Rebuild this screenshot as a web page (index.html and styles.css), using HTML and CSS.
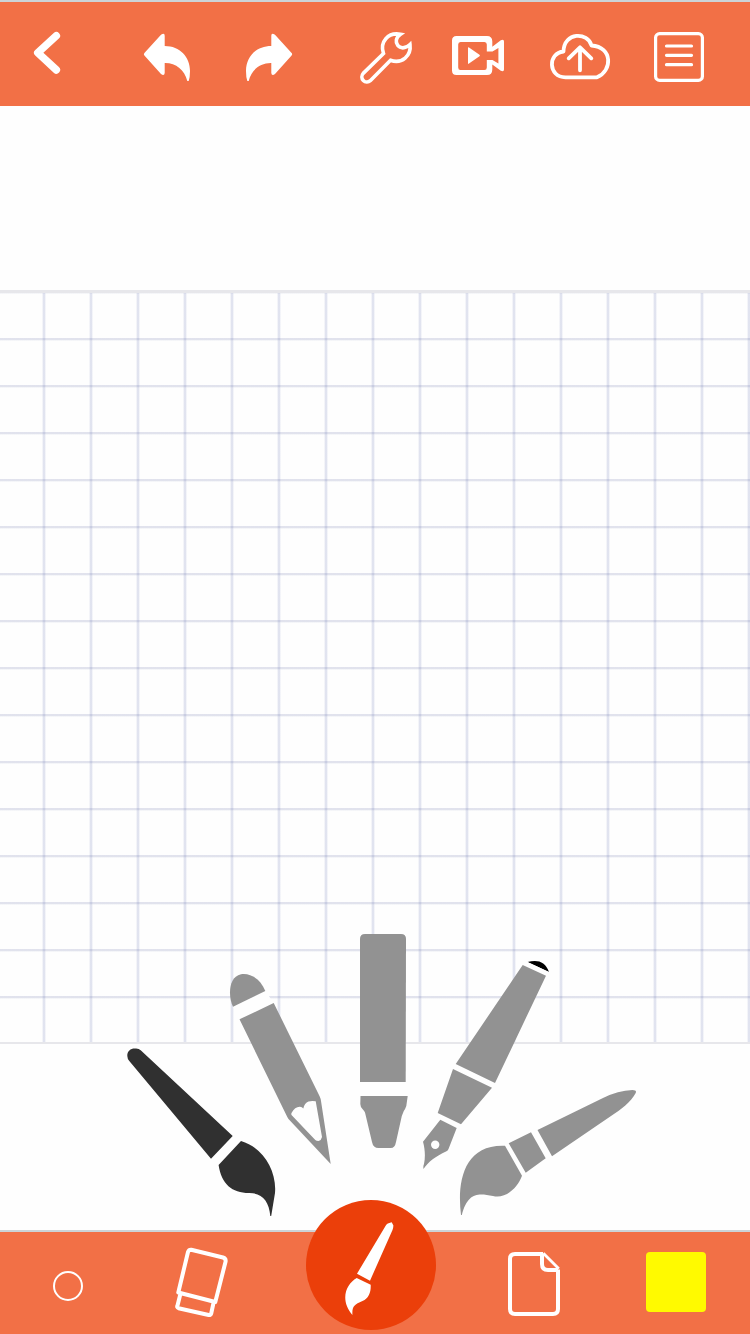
FILE: index.html
```html
<!DOCTYPE html>
<html lang="en">
<head>
<meta charset="utf-8">
<title>Drawing board</title>
<link rel="stylesheet" href="styles.css">
</head>
<body>
<div class="app">
  <header class="toolbar">
    <button class="tool" aria-label="Back"><svg viewBox="0 2 100 104"><path class="line back" d="M56.3 35.8 37.8 52.8 56.3 69.9"/></svg></button>
    <button class="tool" aria-label="Undo"><svg viewBox="100 2 118 104"><path class="solid" d="M144.4 55.5Q143.3 54.3 144.4 53.1L161 34.8Q164.7 32.3 164.7 35.7V46C180 46 190 57 190 71Q190 77 188.7 81H187.3C184.5 70 176 62.8 164.7 63V73Q164.3 76.2 161 74Z"/></svg></button>
    <button class="tool" aria-label="Redo"><svg viewBox="218 2 118 104"><path class="solid" transform="translate(436 0) scale(-1 1)" d="M144.4 55.5Q143.3 54.3 144.4 53.1L161 34.8Q164.7 32.3 164.7 35.7V46C180 46 190 57 190 71Q190 77 188.7 81H187.3C184.5 70 176 62.8 164.7 63V73Q164.3 76.2 161 74Z"/></svg></button>
    <button class="tool" aria-label="Settings"><svg viewBox="336 2 96 104"><path class="line wrench" d="M363.2 73.400 383.500 53.500C379.500 42 388 32 400.500 34.300C390.500 41 400 54 410 44.500C411.500 55.500 402 64.500 390.500 60.300L370.300 80.700A5.100 5.100 0 0 1 363.200 73.400Z"/></svg></button>
    <button class="tool" aria-label="Record video"><svg viewBox="432 2 95 104"><path class="solid" fill-rule="evenodd" d="M456.500 36H487Q492.300 36 492.300 41.500V46.800L500.800 40.300Q504 38.600 504 41.500V69.500Q504 72 500.800 70.700L492.300 64.400V69.500Q492.300 75 487 75H456.500Q452 75 452 70.500V40.500Q452 36 456.500 36ZM460.500 42Q458.200 42 458.200 44.500V67.500Q458.200 70 460.500 70H484.500Q486.800 70 486.800 67.500V60H492.500L498.400 63.600V47.900L492.500 51.500H486.800V44.500Q486.800 42 484.500 42ZM468 48Q468 46.800 469 47.600L479.500 54.800Q480.400 55.500 479.500 56.200L469 63.600Q468 64.400 468 63Z"/></svg></button>
    <button class="tool" aria-label="Upload"><svg viewBox="527 2 105 104"><path class="line cloud" d="M565.5 77.300H597C612.500 71 613 47 591.500 45.500C588 32 564 31.500 563.500 51.500C547.500 53 548 77.300 565.500 77.300Z"/><path class="line cloud" d="M580 48V70.300M568.700 58.300 580 47.300 591.300 58.300"/></svg></button>
    <button class="tool" aria-label="Menu"><svg viewBox="632 2 118 104"><rect class="line menu" x="655.6" y="33.6" width="46.8" height="46.8" rx="4"/><path class="line menu" d="M666.5 46H691.500M666.500 55.300H691.500M666.500 64.700H691.500"/></svg></button>
  </header>

  <main class="workspace">
    <div class="paper"></div>
    <svg class="brush-fan" viewBox="110 920 540 310">
      <g class="brush selected">
        <path d="M127.300 1056C127 1051 131 1048.300 135 1048.500Q138.500 1048 140.700 1050.300L232.700 1136 211 1158.700 129.300 1061Q127.300 1058.500 127.300 1056Z"/>
        <path d="M241 1141C262 1147 277 1170 275 1193L271.200 1216H270.300C269 1201 262 1192.800 249 1193C232 1193 221.500 1184 218.600 1165Z"/>
      </g>
      <g class="brush">
        <path class="gap" d="M233 1006.700 265.300 991 273.700 1003 239.500 1019.300Z"/>
        <path d="M233 1006.700C228.500 998 227.500 977 241 974.200C251 972.500 261 980 265.300 991Z"/>
        <path d="M239.500 1019.300 273.700 1003 319.500 1096Q320.700 1098.500 321 1101L330.700 1164 288.500 1119Q287.500 1117.500 286.800 1116Z"/>
        <path class="gap" d="M315.700 1101.300 322 1137Q321.500 1140 318.500 1141Q316.500 1141 315.300 1140L291.500 1115Q291 1114 291.500 1113Q295 1106.500 300 1106.700Q302 1107 303.300 1108.500Q304.500 1103 308.500 1101.500Q311.500 1100.800 315.700 1101.300Z"/>
      </g>
      <g class="brush">
        <path d="M360 1082V939Q360 934 365 934H401Q406 934 406 939L405.700 1082Z"/>
        <path d="M360.500 1096H407.700L406.300 1106Q405.500 1108.500 403.800 1111L401.800 1116 396 1142Q395 1148 390.700 1148H378.500Q373.200 1148 372 1142L365 1112.500Q364.500 1111 362.500 1109Q360.300 1106.500 360.300 1104Z"/>
      </g>
      <g class="brush">
        <path class="ink" d="M527.500 962C538 959.500 545 961.500 549 972Z"/>
        <path class="gap" d="M527.500 962 549 972 546 975.700 522.700 965Z"/>
        <path d="M522.700 965 546 975.700 495 1083 455.700 1064ZM453 1069 492 1087.700 461 1124.300 437.700 1113ZM440.300 1119.700 456.700 1128 448.500 1149Q448 1150.700 446 1151.500C436 1156 428 1162 423.500 1169Q423 1166 424 1164C425.500 1157 425 1149 423 1141.700Z"/>
        <circle class="gap" cx="435.2" cy="1144.7" r="4.2"/>
      </g>
      <g class="brush">
        <path d="M505 1145.800 522 1175.800C517 1189 505 1199 493 1196C478 1193 468 1192 461.800 1215H461C457 1183 463 1144 505 1145.800ZM508.700 1143.300 531 1132.300 545.700 1158.300 525.700 1172.700ZM537.500 1130 603 1098Q618 1090.500 632.500 1090Q637 1090 635.700 1093C631 1102 621 1109.500 611 1116L552 1156.300Z"/>
      </g>
    </svg>
  </main>

  <footer class="dock">
    <button class="tool" aria-label="Brush size"><svg viewBox="0 1232 136 102"><circle class="line size" cx="68" cy="1286" r="14"/></svg></button>
    <button class="tool" aria-label="Eraser"><svg viewBox="136 1232 134 102"><path class="line eraser" d="M178.300 1292.500 188 1252Q189 1249.500 191.300 1249.800L223 1257.500Q226 1258.500 225.600 1261.500L215.300 1302 178.300 1292.500M180.500 1293.500 177.500 1305.500Q176.500 1307.500 178.500 1308.200L208.700 1315Q210.700 1315.500 211.200 1313.500L213.700 1302"/></svg></button>
    <button class="tool current" aria-label="Brush"><span class="disc"><svg viewBox="306 1200 130 130"><path class="solid" d="M357 1273.700 385.800 1225.500Q386.800 1223.500 388.500 1223.200L391.700 1222.200 393.400 1225.500Q393.300 1228 392.500 1230L370 1280.700ZM356.700 1278 370.700 1284.800C371 1292 369 1298 362.500 1301C354 1304.500 352 1306.500 352.400 1315C339.500 1300 346 1284 356.700 1278Z"/></svg></span></button>
    <button class="tool" aria-label="Page"><svg viewBox="470 1232 130 102"><path class="line page" d="M543 1254H515Q510 1254 510 1259V1309Q510 1314 515 1314H553Q558 1314 558 1309V1269.500"/><path class="line page" d="M542 1254V1264Q542 1270 548 1270H558"/><path class="line fold" d="M543.300 1253.200 558.800 1268.700"/></svg></button>
    <button class="tool" aria-label="Colour"><span class="swatch"></span></button>
  </footer>
</div>
</body>
</html>
```
FILE: styles.css
```css
* { box-sizing: border-box; }

body { margin: 0; background: #fff; }

.app {
  display: flex;
  flex-direction: column;
  width: 750px;
  height: 1334px;
  overflow: hidden;
  font-family: "Liberation Sans", sans-serif;
}

.toolbar,
.dock {
  display: grid;
  flex: none;
  background: #f27046;
  border-top: 2px solid #ccd4d7;
}

.toolbar {
  height: 106px;
  grid-template-columns: 100px 118px 118px 96px 95px 105px 118px;
}

.dock {
  height: 104px;
  grid-template-columns: 136px 134px 200px 130px 150px;
}

.tool {
  display: flex;
  padding: 0;
  border: 0;
  background: none;
}

.tool svg { display: block; width: 100%; height: 100%; }

.solid { fill: #fff; }

.line {
  fill: none;
  stroke: #fff;
  stroke-linecap: round;
  stroke-linejoin: round;
}

.back { stroke-width: 7.6; }
.wrench { stroke-width: 3.6; stroke-linejoin: miter; }
.cloud { stroke-width: 3.8; }
.menu { stroke-width: 3.2; }
.size { stroke-width: 2; }
.eraser { stroke-width: 4; }
.page { stroke-width: 4; stroke-linecap: butt; }
.fold { stroke-width: 2.8; stroke-linecap: butt; }

.workspace {
  position: relative;
  flex: 1;
  padding-top: 184px;
  background: #fefefe;
}

.paper {
  height: 754px;
  border-top: 3px solid #e7e7eb;
  border-bottom: 2px solid #e7e7eb;
  background-image:
    linear-gradient(90deg, rgba(75, 90, 165, 0.06) 1px, rgba(75, 90, 165, 0.16) 1px 3px, rgba(75, 90, 165, 0.06) 3px 4px, transparent 4px),
    linear-gradient(rgba(75, 85, 150, 0.16) 2px, rgba(75, 85, 150, 0.05) 2px 3px, transparent 3px);
  background-size: 47px 47px;
  background-position: 42px 0, 0 45px;
}

.brush-fan {
  position: absolute;
  left: 110px;
  bottom: 0;
  width: 540px;
  height: 310px;
}

.brush { fill: #929292; }
.selected { fill: #303030; }
.brush .gap { fill: #fefefe; }
.brush .ink { fill: #000; }

.current { padding-left: 36px; }

.disc {
  z-index: 1;
  width: 130px;
  height: 130px;
  margin-top: -32px;
  flex: none;
  align-self: flex-start;
  border-radius: 50%;
  background: #eb3f0a;
}

.swatch {
  width: 60px;
  height: 60px;
  margin: 20px 0 0 46px;
  align-self: flex-start;
  border-radius: 4px;
  background: #fffa00;
}
```
